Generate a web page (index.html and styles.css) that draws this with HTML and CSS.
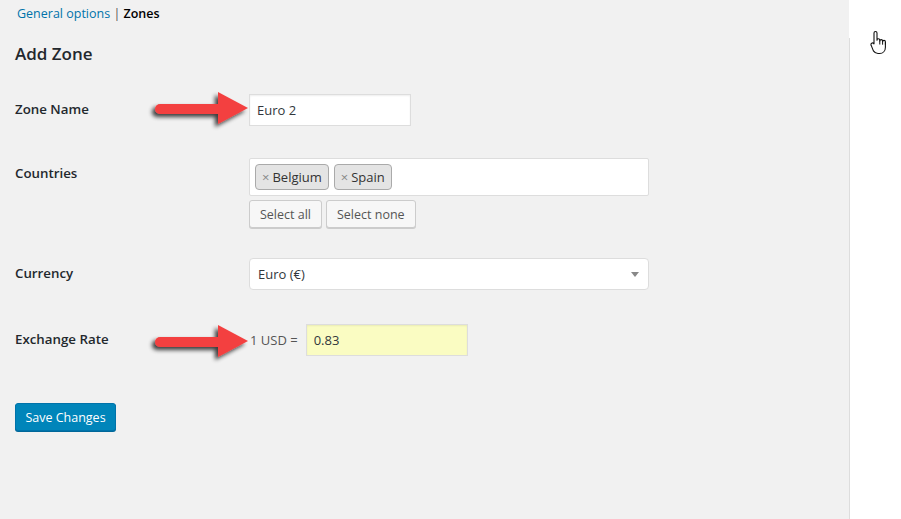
FILE: index.html
```html
<!DOCTYPE html>
<html lang="en">
<head>
    <meta charset="UTF-8">
    <meta name="viewport" content="width=device-width, initial-scale=1.0">
    <title>Zones</title>
    <link rel="stylesheet" href="styles.css">
</head>
<body>
    <div class="screen">
        <div class="wrap">
            <div class="subnav">
                <a href="#">General options</a> <span class="sep">|</span> <strong>Zones</strong>
            </div>
            <h2>Add Zone</h2>

            <div class="form-table">
                <div class="row row-name">
                    <label>Zone Name</label>
                    <div class="field">
                        <input type="text" class="text-input" value="Euro 2">
                    </div>
                </div>

                <div class="row row-countries">
                    <label>Countries</label>
                    <div class="field">
                        <div class="multi-select">
                            <span class="tag"><span class="tag-x">&times;</span>Belgium</span>
                            <span class="tag"><span class="tag-x">&times;</span>Spain</span>
                        </div>
                        <div class="select-buttons">
                            <button class="button">Select all</button>
                            <button class="button">Select none</button>
                        </div>
                    </div>
                </div>

                <div class="row row-currency">
                    <label>Currency</label>
                    <div class="field">
                        <div class="single-select">
                            <span>Euro (&euro;)</span>
                            <span class="caret"></span>
                        </div>
                    </div>
                </div>

                <div class="row row-rate">
                    <label>Exchange Rate</label>
                    <div class="field rate-field">
                        <span class="rate-label">1 USD =</span>
                        <input type="text" class="text-input rate-input" value="0.83">
                    </div>
                </div>
            </div>

            <button class="button-primary">Save Changes</button>
        </div>

        <div class="side">
            <div class="side-top"></div>
            <div class="side-body"></div>
        </div>

        <!-- annotation arrows drawn over the form -->
        <svg class="arrow arrow-name" width="110" height="50" viewBox="0 0 110 50">
            <defs>
                <filter id="shadow" x="-20%" y="-40%" width="140%" height="180%">
                    <feGaussianBlur in="SourceAlpha" stdDeviation="2.2"/>
                    <feOffset dx="-3" dy="3" result="blur"/>
                    <feComponentTransfer><feFuncA type="linear" slope="0.75"/></feComponentTransfer>
                    <feMerge><feMergeNode/><feMergeNode in="SourceGraphic"/></feMerge>
                </filter>
            </defs>
            <g filter="url(#shadow)" fill="#f34040">
                <rect x="9" y="18" width="72" height="10" rx="5"/>
                <polygon points="72,6 102,22 72,38"/>
            </g>
        </svg>
        <svg class="arrow arrow-rate" width="110" height="50" viewBox="0 0 110 50">
            <g filter="url(#shadow)" fill="#f34040">
                <rect x="9" y="18" width="72" height="10" rx="5"/>
                <polygon points="72,6 102,22 72,38"/>
            </g>
        </svg>

        <svg class="cursor" width="18" height="26" viewBox="0 0 18 26">
            <path d="M5.5 1.5c.9 0 1.5.6 1.5 1.5v7.2c0-.8.6-1.4 1.4-1.4s1.4.6 1.4 1.4v.8c0-.8.6-1.4 1.4-1.4s1.4.6 1.4 1.4v.8c0-.8.6-1.4 1.4-1.4s1.4.6 1.4 1.4v5.4c0 3.6-2.4 6.300-5.8 6.3h-1.6c-2.1 0-3.4-.9-4.6-2.6L1.3 15.6c-.6-.9-.4-1.900.4-2.4.8-.5 1.7-.2 2.3.6l0 0V3c0-.9.6-1.5 1.5-1.5z" fill="#fff" stroke="#111" stroke-width="1.1" stroke-linejoin="round"/>
            <path d="M9.8 10.5v4M12.6 11.3v3.4M15.4 12.1v2.6" stroke="#111" stroke-width="1" fill="none"/>
        </svg>
    </div>
</body>
</html>
```

FILE: styles.css
```css
* {
    box-sizing: border-box;
}
body {
    margin: 0;
    font-family: "Open Sans", "Noto Sans", Arial, sans-serif;
    font-size: 13px;
    color: #444;
    background-color: #f1f1f1;
}
.screen {
    position: relative;
    display: flex;
    width: 901px;
    height: 519px;
    overflow: hidden;
}
.wrap {
    width: 849px;
    padding: 0 15px;
}
.subnav {
    margin-top: 5px;
    padding-left: 2px;
    line-height: 18px;
    font-size: 12.5px;
    color: #666;
}
.subnav a {
    color: #0073aa;
    text-decoration: none;
}
.subnav strong {
    color: #000;
    font-weight: 600;
}
.sep {
    color: #555;
}
h2 {
    margin: 19px 0 0;
    font-size: 17px;
    font-weight: 600;
    color: #23282d;
    line-height: 24px;
}

/* form rows */
.form-table {
    margin-top: 28px;
}
.row {
    display: flex;
    margin-bottom: 32px;
}
.row-countries {
    margin-bottom: 30px;
}
.row-currency {
    margin-bottom: 34px;
}
.row-rate {
    margin-bottom: 47px;
}
.row label {
    width: 234px;
    flex-shrink: 0;
    padding-top: 5px;
    line-height: 20px;
    font-size: 13.3px;
    font-weight: 600;
    color: #23282d;
}
.text-input {
    width: 162px;
    height: 32px;
    padding: 0 7px;
    border: 1px solid #ddd;
    box-shadow: inset 0 1px 2px rgba(0, 0, 0, 0.07);
    background-color: #fff;
    font-family: inherit;
    font-size: 13px;
    color: #32373c;
    outline: none;
}

/* countries */
.multi-select {
    width: 400px;
    height: 38px;
    padding: 5px 5px 0;
    display: flex;
    gap: 5px;
    background-color: #fff;
    border: 1px solid #ddd;
    border-radius: 2px;
}
.tag {
    display: flex;
    align-items: center;
    height: 26px;
    padding: 0 6px 0 6px;
    background-color: #e4e4e4;
    border: 1px solid #aaa;
    border-radius: 4px;
    font-size: 13px;
    color: #333;
}
.tag-x {
    color: #888;
    margin-right: 3px;
    font-size: 13px;
}
.select-buttons {
    display: flex;
    gap: 4px;
    margin-top: 4px;
}
.button {
    height: 28px;
    padding: 0 10px;
    background-color: #f7f7f7;
    border: 1px solid #ccc;
    border-radius: 3px;
    box-shadow: 0 1px 0 #ccc;
    font-family: inherit;
    font-size: 12.5px;
    color: #555;
    cursor: pointer;
}

/* currency */
.single-select {
    width: 400px;
    height: 32px;
    display: flex;
    align-items: center;
    justify-content: space-between;
    padding: 0 9px 0 8px;
    background-color: #fff;
    border: 1px solid #ddd;
    border-radius: 4px;
    font-size: 13px;
    color: #32373c;
}
.caret {
    width: 0;
    height: 0;
    border-left: 4px solid transparent;
    border-right: 4px solid transparent;
    border-top: 5px solid #888;
    margin-top: 1px;
}

/* exchange rate */
.rate-field {
    display: flex;
    align-items: center;
    gap: 8px;
}
.rate-label {
    font-size: 13px;
    color: #555;
    padding-left: 1px;
}
.rate-input {
    background-color: #fafcc2;
}

.button-primary {
    width: 101px;
    height: 28px;
    padding: 0;
    background-color: #0085ba;
    border: 1px solid #0073aa;
    border-radius: 3px;
    box-shadow: 0 1px 0 #006799;
    font-family: inherit;
    font-size: 12.5px;
    color: #fff;
    cursor: pointer;
}

/* right column */
.side {
    flex: 1;
    display: flex;
    flex-direction: column;
    background-color: #fff;
}
.side-top {
    height: 38px;
}
.side-body {
    flex: 1;
    border-left: 1px solid #ddd;
}

/* overlays */
.arrow {
    position: absolute;
    left: 146px;
}
.arrow-name {
    top: 86px;
}
.arrow-rate {
    top: 319px;
}
.cursor {
    position: absolute;
    left: 870px;
    top: 30px;
}
```
